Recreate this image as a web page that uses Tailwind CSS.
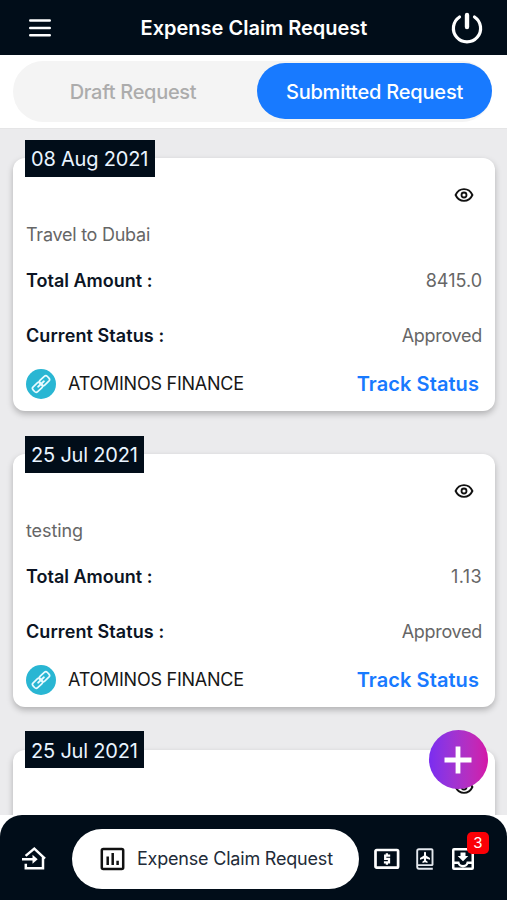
<!DOCTYPE html>
<html lang="en">
<head>
<meta charset="utf-8">
<title>Expense Claim Request</title>
<script src="https://cdn.jsdelivr.net/npm/@tailwindcss/browser@4"></script>
</head>
<body class="w-[507px] h-[900px] overflow-hidden bg-white font-['Inter',sans-serif] whitespace-nowrap">
<svg class="hidden">
  <symbol id="eye" viewBox="0 0 20 16"><path d="M1.600 8C3.400 4 6.400 2.100 10 2.100S16.600 4 18.400 8C16.600 12 13.600 13.900 10 13.900S3.400 12 1.600 8Z" fill="none" stroke="#111" stroke-width="1.900"/><circle cx="10" cy="8" r="2.500" fill="none" stroke="#111" stroke-width="1.800"/></symbol>
  <symbol id="link" viewBox="0 0 20 20"><g transform="rotate(-43 10 10)" fill="none" stroke="#e9fbff" stroke-width="1.700"><rect x="0.200" y="6.700" width="10" height="6.600" rx="2.200"/><rect x="9.800" y="6.700" width="10" height="6.600" rx="2.200"/><path d="M6 10h8" stroke-width="1.800" stroke-linecap="round"/></g></symbol>
</svg>
<div class="flex flex-col h-[900px]">
  <header class="h-[55px] shrink-0 bg-[#010d19] flex items-center justify-between pl-[29px] pr-[22px] text-white">
    <svg class="w-[22px] h-5" viewBox="0 0 22 20" fill="none" stroke="#fff" stroke-width="2.400" stroke-linecap="round"><path d="M1.200 2.500h19.600M1.200 10h19.600M1.200 17.300h19.600"/></svg>
    <h1 class="text-[20px] font-semibold leading-6 tracking-[0px] pl-[8px]">Expense Claim Request</h1>
    <svg class="w-9 h-9" viewBox="0 0 36 36" fill="none" stroke="#fff" stroke-linecap="round"><path d="M10.500 7A13.600 13.600 0 1 0 25.500 7" stroke-width="3.200"/><path d="M18 5v12" stroke-width="4.400"/></svg>
  </header>
  <div class="h-[74px] shrink-0 bg-white border-b border-[#e5e5e6] pt-[6px] pl-[13px] pr-[15px]">
    <div class="h-[61px] rounded-full bg-[#f4f4f4] flex items-start pt-[2px] text-[20px] leading-[58px] text-center">
      <div class="w-[244px] pr-[4px] text-[#acacac] font-medium tracking-[-0.300px]">Draft Request</div>
      <div class="w-[235px] h-[56px] rounded-full bg-[#187aff] text-white font-medium tracking-[-0.200px]">Submitted Request</div>
    </div>
  </div>
  <main class="h-[686px] shrink-0 overflow-hidden bg-[#ebebed] pl-[13px] pr-[12px] pt-[11px]">
    <section class="h-[271px] mb-[25px] pt-[18px] relative">
      <div class="h-[253px] rounded-[12px] bg-white shadow-[0_3px_6px_rgba(0,0,0,0.25)] px-[13px] flex flex-col">
        <div class="h-[63px] pt-[29px] pr-[8px] flex justify-end"><svg class="w-5 h-4"><use href="#eye"/></svg></div>
        <p class="h-[28px] leading-[27px] text-[18px] tracking-[-0.250px] text-[#666]">Travel to Dubai</p>
        <div class="h-[64px] leading-[64px] flex justify-between"><b class="font-semibold text-[18px] text-[#0b1424]">Total Amount :</b><span class="text-[18px] text-[#666]">8415.0</span></div>
        <div class="h-[46px] leading-[46px] flex justify-between"><b class="font-semibold text-[18px] tracking-[0.080px] text-[#0b1424]">Current Status :</b><span class="text-[18px] tracking-[-0.300px] text-[#666]">Approved</span></div>
        <div class="h-[50px] leading-[50px] flex items-center pr-[3px]"><span class="size-[30px] rounded-full bg-[#29b6d3] flex items-center justify-center mr-[12px]"><svg class="size-5"><use href="#link"/></svg></span><span class="text-[18px] tracking-[-0.250px] text-[#171717]">ATOMINOS FINANCE</span><a class="ml-auto text-[20px] font-semibold tracking-[0.080px] text-[#187aff]">Track Status</a></div>
      </div>
      <div class="absolute left-[12px] top-0 w-[130px] h-[37px] bg-[#010d19] text-[#e9f4ff] text-[20px] tracking-[-0.200px] leading-[38px] pl-[6px]">08 Aug 2021</div>
    </section>
    <section class="h-[271px] mb-[25px] pt-[18px] relative">
      <div class="h-[253px] rounded-[12px] bg-white shadow-[0_3px_6px_rgba(0,0,0,0.25)] px-[13px] flex flex-col">
        <div class="h-[63px] pt-[29px] pr-[8px] flex justify-end"><svg class="w-5 h-4"><use href="#eye"/></svg></div>
        <p class="h-[28px] leading-[27px] text-[18px] tracking-[-0.100px] text-[#666]">testing</p>
        <div class="h-[64px] leading-[64px] flex justify-between"><b class="font-semibold text-[18px] text-[#0b1424]">Total Amount :</b><span class="text-[18px] tracking-[0.400px] text-[#666]">1.13</span></div>
        <div class="h-[46px] leading-[46px] flex justify-between"><b class="font-semibold text-[18px] tracking-[0.080px] text-[#0b1424]">Current Status :</b><span class="text-[18px] tracking-[-0.300px] text-[#666]">Approved</span></div>
        <div class="h-[50px] leading-[50px] flex items-center pr-[3px]"><span class="size-[30px] rounded-full bg-[#29b6d3] flex items-center justify-center mr-[12px]"><svg class="size-5"><use href="#link"/></svg></span><span class="text-[18px] tracking-[-0.250px] text-[#171717]">ATOMINOS FINANCE</span><a class="ml-auto text-[20px] font-semibold tracking-[0.080px] text-[#187aff]">Track Status</a></div>
      </div>
      <div class="absolute left-[12px] top-0 w-[119px] h-[37px] bg-[#010d19] text-[#e9f4ff] text-[20px] tracking-[-0.200px] leading-[38px] pl-[6px]">25 Jul 2021</div>
    </section>
    <section class="h-[271px] pt-[18px] relative">
      <div class="h-[253px] rounded-[12px] bg-white shadow-[0_3px_6px_rgba(0,0,0,0.25)] px-[13px]">
        <div class="h-[63px] pt-[29px] pr-[8px] flex justify-end"><svg class="w-5 h-4"><use href="#eye"/></svg></div>
      </div>
      <div class="absolute left-[12px] top-[-1px] w-[119px] h-[37px] bg-[#010d19] text-[#e9f4ff] text-[20px] tracking-[-0.200px] leading-[40px] pl-[6px]">25 Jul 2021</div>
    </section>
  </main>
  <nav class="h-[85px] shrink-0 bg-[#010d19] rounded-t-[22px] flex items-center pt-[3px] pl-[21px] text-white">
    <svg class="size-[26px] mr-[25px]" viewBox="0 0 26 26" fill="none" stroke="#fff" stroke-width="2.500"><path d="M4.600 9.900L13.300 2.600L24 12.600M22 10.500V22.300H4.800V17.800M1 13.300H14"/><path d="M11.500 8.800L16.700 13.300L11.500 17.800Z" fill="#fff" stroke="none"/></svg>
    <div class="w-[287px] h-[60px] rounded-full bg-white flex items-center pl-[28px] text-[#222b38]">
      <svg class="size-[25px] mr-[12px]" viewBox="0 0 25 25"><rect x="1.800" y="2" width="21.400" height="20" rx="1.500" fill="none" stroke="#111" stroke-width="2.500"/><path d="M7.700 9.500v8.500M12.700 6v12M17.600 13.700v4.300" stroke="#111" stroke-width="2.500"/></svg>
      <span class="text-[18px] leading-6 tracking-[-0.200px]">Expense Claim Request</span>
    </div>
    <svg class="w-[26px] h-[22px] ml-[15px]" viewBox="0 0 26 22"><rect x="1.500" y="2" width="22.600" height="17.600" rx="1.200" fill="none" stroke="#fff" stroke-width="2.700"/><path d="M16.200 7.700H11.200V10.900H15V14.300H9.900M12.900 5.200V8M12.900 14V16.700" fill="none" stroke="#fff" stroke-width="2.300"/></svg>
    <svg class="w-[18px] h-[22px] ml-[16px]" viewBox="0 0 18 22"><path d="M16.500 17.200V2.400Q16.500 1.200 15.300 1.200H2.900Q1.200 1.200 1.200 3V18.800Q1.200 20.800 3 20.800H16.800M1.500 17.100H16.800" fill="none" stroke="#e4e8ee" stroke-width="1.900"/><path d="M8 4.500Q9 2.800 10 4.500V7.500L14 10V11.800L10 10.600V12.400L11.500 13.600V14.900L9 14.200L6.500 14.900V13.600L8 12.400V10.600L4 11.800V10L8 7.500Z" fill="#fff"/></svg>
    <div class="relative ml-[17px]">
      <svg class="w-6 h-6" viewBox="0 0 24 24"><path fill="#fff" fill-rule="evenodd" d="M3 1H21Q23 1 23 3V21Q23 23 21 23H3Q1 23 1 21V3Q1 1 3 1ZM3.500 3.500V14.500H8.300Q8.600 18 12 18T15.700 14.500H20.500V3.500ZM3.500 17V20.500H20.500V17H17.300Q15.500 20.300 12 20.300T6.700 17Z"/><path d="M9.500 5.500H14.500V9H17.300L12 14.300L6.700 9H9.500Z" fill="#fff"/></svg>
      <span class="absolute left-[16px] -top-[15px] w-[22px] h-[22px] rounded-[5px] bg-[#fb0006] text-[15px] leading-[22px] text-center">3</span>
    </div>
  </nav>
</div>
<button class="absolute left-[429px] top-[730px] size-[59px] rounded-full bg-linear-to-r from-[#7a2cf0] to-[#d414a8] flex items-center justify-center pr-px"><svg class="size-7" viewBox="0 0 28 28" stroke="#fff" stroke-width="4.800"><path d="M0.500 14H27.500M14 0.500V27.500"/></svg></button>
</body>
</html>
